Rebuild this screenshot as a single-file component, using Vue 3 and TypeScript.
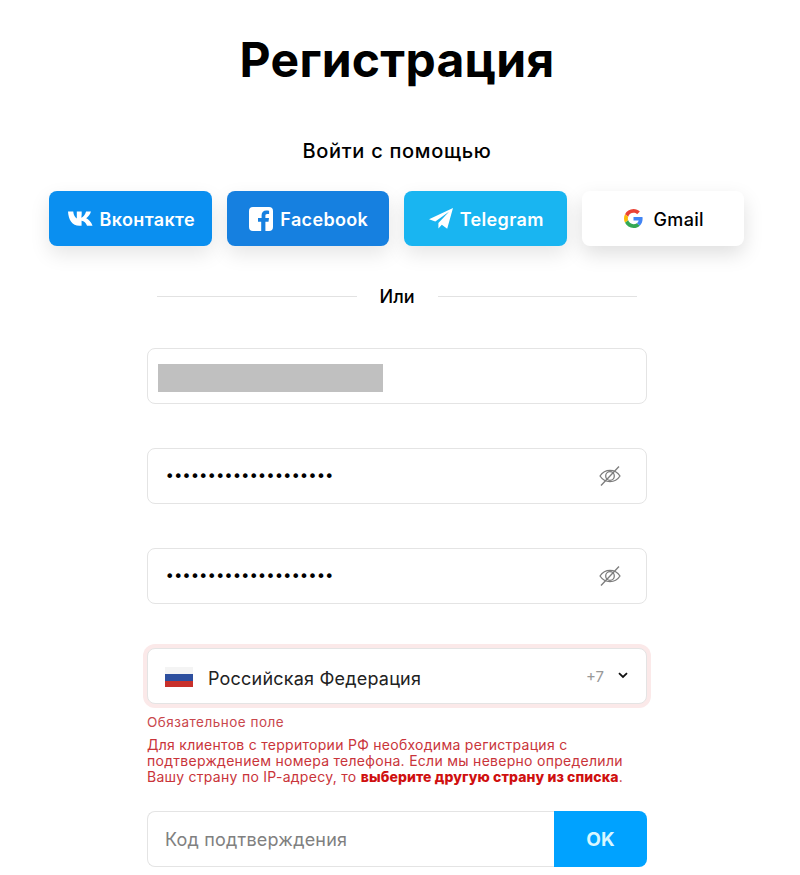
<script setup lang="ts">
const dots = "•".repeat(20);
const passwords = [dots, dots];
</script>

<template>
  <div class="page">
    <h1 class="title">Регистрация</h1>
    <div class="login-with">Войти с помощью</div>

    <div class="socials">
      <a class="social vk">
        <svg width="25" height="15" viewBox="0 0 21 15" preserveAspectRatio="none">
          <path fill="#fff" d="M0 .6h4.400c.2 3.600 1.700 6 3 6.800V.6h4.100v2.600l-.3 3.600c1.500-.3 3-2.600 4-6.200h4.100c-.7 3-2.500 5.500-4 6.700 1.900 1 4.200 3.500 5.300 7.500H16c-.9-2.900-2.500-4.700-4.600-5v5H9.600C3.500 14.800.4 9 0 .6z" />
        </svg>
        <span>Вконтакте</span>
      </a>
      <a class="social fb">
        <svg width="24" height="24" viewBox="0 0 24 24">
          <path fill="#fff" d="M4 0h16a4 4 0 0 1 4 4v16a4 4 0 0 1-4 4h-3.600v-9.200h3.100l.5-3.700h-3.600V8.800c0-1.100.3-1.800 1.800-1.800h1.900V3.700c-.4-.1-1.500-.2-2.800-.2-2.800 0-4.700 1.700-4.700 4.800v2.800H9v3.700h3.200V24H4a4 4 0 0 1-4-4V4a4 4 0 0 1 4-4z" />
        </svg>
        <span>Facebook</span>
      </a>
      <a class="social tg">
        <svg width="24" height="21" viewBox="0 0 24 21">
          <path fill="#fff" d="M24 0 0 11.200l6.300 2.200L20 3.700 9.400 14.900v5.600l3.400-3.700 5.400 3.900z" />
        </svg>
        <span>Telegram</span>
      </a>
      <a class="social gm">
        <svg width="19" height="19" viewBox="0 0 48 48">
          <path fill="#EA4335" d="M24 9.500c3.500 0 6.700 1.200 9.200 3.600l6.900-6.900C35.900 2.400 30.500 0 24 0 14.600 0 6.500 5.400 2.600 13.200l8 6.200C12.500 13.700 17.800 9.500 24 9.500z" />
          <path fill="#4285F4" d="M47 24.500c0-1.600-.1-3.100-.4-4.500H24v9h13c-.6 3-2.200 5.500-4.800 7.200l7.700 6C44.400 38 47 31.800 47 24.500z" />
          <path fill="#FBBC05" d="M10.500 28.600c-.5-1.500-.8-3-.8-4.600s.3-3.100.8-4.600l-8-6.200C.9 16.500 0 20.100 0 24s.9 7.500 2.600 10.800l7.900-6.200z" />
          <path fill="#34A853" d="M24 48c6.500 0 11.900-2.100 15.900-5.800l-7.700-6c-2.200 1.400-4.900 2.300-8.200 2.300-6.200 0-11.500-4.200-13.400-9.900l-8 6.200C6.500 42.600 14.600 48 24 48z" />
        </svg>
        <span>Gmail</span>
      </a>
    </div>

    <div class="divider"><span>Или</span></div>

    <div class="form">
      <div class="field email"><div class="redacted"></div></div>

      <div v-for="(p, i) in passwords" :key="i" class="field password">
        <span class="dots">{{ p }}</span>
        <svg class="eye" width="24" height="22" viewBox="0 0 24 22" fill="none" stroke="#7d7d7d" stroke-width="1.300">
          <path d="M2 11c2.500-3.800 5.800-5.700 10-5.700S19.500 7.200 22 11c-2.500 3.800-5.800 5.700-10 5.700S4.500 14.800 2 11z" />
          <circle cx="12" cy="11" r="4.300" />
          <path d="M21 1.500 3 20.500" />
        </svg>
      </div>

      <div class="country-group">
        <div class="field country">
          <svg class="flag" width="28" height="20" viewBox="0 0 28 20">
            <rect width="28" height="7" fill="#f4f4f4" />
            <rect y="7" width="28" height="7" fill="#2d4f9e" />
            <rect y="14" width="28" height="6" fill="#c8302b" />
          </svg>
          <span class="country-name">Российская Федерация</span>
          <span class="code">+7</span>
          <svg class="chevron" width="10" height="7" viewBox="0 0 10 7" fill="none" stroke="#111" stroke-width="1.800">
            <path d="M1 1.200 5 5l4-3.800" />
          </svg>
        </div>
        <div class="required">Обязательное поле</div>
        <p class="notice">
          Для клиентов с территории РФ необходима регистрация с подтверждением номера телефона. Если мы неверно определили Вашу страну по IP-адресу, то
          <b>выберите другую страну из списка</b>.
        </p>
      </div>

      <div class="confirm">
        <div class="confirm-input">Код подтверждения</div>
        <button class="ok">OK</button>
      </div>
    </div>
  </div>
</template>

<style>
html,
body {
  background: #fff;
}
</style>

<style scoped>
.page {
  width: 794px;
  height: 875px;
  overflow: hidden;
  display: flex;
  flex-direction: column;
  align-items: center;
  font-family: Inter, "Noto Sans", sans-serif;
  color: #000;
}

.title {
  margin: 31px 0 0;
  font-size: 48px;
  line-height: 58px;
  font-weight: 700;
  letter-spacing: 0.25px;
}

.login-with {
  margin-top: 50px;
  font-size: 20px;
  line-height: 24px;
  font-weight: 500;
  letter-spacing: 0.7px;
}

.socials {
  margin: 28px 1px 0 0;
  display: flex;
  gap: 15px;
}

.social {
  box-sizing: border-box;
  width: 162.5px;
  height: 55px;
  padding-left: 2px;
  border-radius: 8px;
  display: flex;
  align-items: center;
  justify-content: center;
  gap: 7px;
  color: #fff;
  font-size: 18px;
  font-weight: 600;
  letter-spacing: 0.35px;
  box-shadow: 0 8px 20px rgba(0, 0, 0, 0.1);
}

.social span {
  padding-top: 2px;
}

.vk {
  background: #0a8ff0;
}

.fb {
  background: #1680e0;
}

.tg {
  background: #19b5f1;
}

.gm {
  background: #fff;
  color: #000;
  font-weight: 500;
  gap: 11px;
  box-shadow: 0 8px 20px rgba(0, 0, 0, 0.13);
}

.divider {
  margin-top: 38px;
  width: 480px;
  height: 24px;
  display: flex;
  align-items: center;
  gap: 23px;
  font-size: 18px;
  line-height: 24px;
  font-weight: 500;
}

.divider span {
  margin-top: 2px;
}

.divider::before,
.divider::after {
  content: "";
  flex: 1;
  height: 1px;
  background: #e2e2e2;
}

.form {
  margin-top: 40px;
  width: 500px;
  display: flex;
  flex-direction: column;
  gap: 44px;
}

.field {
  box-sizing: border-box;
  height: 56px;
  border: 1px solid #e4e4e4;
  border-radius: 8px;
  background: #fff;
  display: flex;
  align-items: center;
}

.redacted {
  margin: 4px 0 0 10px;
  width: 225px;
  height: 28px;
  background: #c0c0c0;
}

.password {
  padding: 0 24px 0 17px;
  justify-content: space-between;
}

.dots {
  padding-top: 1px;
  font-family: "DejaVu Sans", sans-serif;
  font-size: 16px;
  letter-spacing: -1.04px;
}

.country-group {
  display: flex;
  flex-direction: column;
}

.country {
  padding: 0 18px 0 17px;
  box-shadow: 0 0 0 4px #fbe9e9;
}

.flag {
  margin-top: 1px;
}

.country-name {
  margin: 5px 0 0 15px;
  flex: 1;
  font-size: 18px;
  letter-spacing: 0.2px;
  color: #222;
}

.code {
  font-size: 15px;
  color: #999;
}

.chevron {
  margin-left: 14px;
  margin-top: -1px;
}

.required {
  margin-top: 10px;
  font-size: 13.5px;
  line-height: 16px;
  letter-spacing: 0.5px;
  color: #c9474d;
}

.notice {
  margin: 7px 0 0;
  font-size: 14px;
  line-height: 16px;
  letter-spacing: 0.28px;
  color: #c9343a;
  width: 490px;
}

.notice b {
  color: #cf1010;
  font-weight: 800;
  letter-spacing: 0.1px;
}

.confirm {
  margin-top: -18px;
  display: flex;
  height: 56px;
}

.confirm-input {
  box-sizing: border-box;
  flex: 1;
  border: 1px solid #e4e4e4;
  border-right: 0;
  border-radius: 8px 0 0 8px;
  padding-left: 17px;
  display: flex;
  align-items: center;
  font-size: 18px;
  letter-spacing: 0.2px;
  color: #808080;
}

.ok {
  width: 93px;
  border: 0;
  border-radius: 0 8px 8px 0;
  background: #00a2ff;
  color: #d8f6ff;
  font-family: inherit;
  font-size: 19px;
  font-weight: 700;
}
</style>
